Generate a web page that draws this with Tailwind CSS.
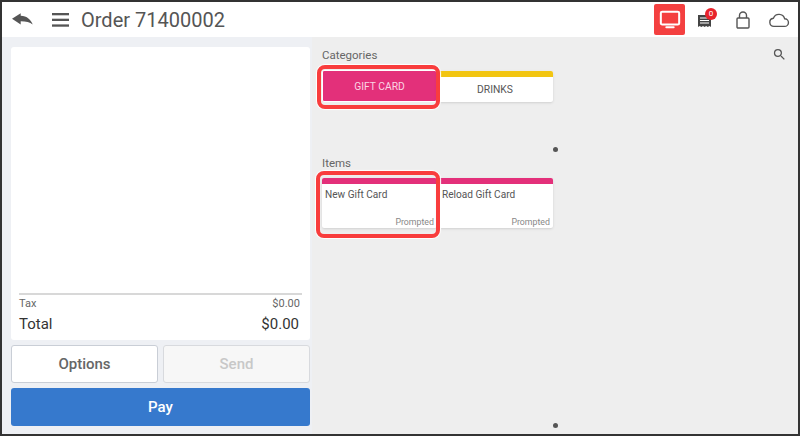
<!DOCTYPE html>
<html lang="en">
<head>
  <meta charset="UTF-8">
  <title>Order 71400002</title>
  <script src="https://cdn.jsdelivr.net/npm/@tailwindcss/browser@4"></script>
</head>
<body class="bg-white font-['Roboto',sans-serif]">
  <div class="w-[800px] h-[436px] border-2 border-[#333] flex flex-col overflow-hidden">
    <!-- top bar -->
    <header class="h-[35px] shrink-0 bg-white flex items-center pl-[8px] text-[#555]">
      <svg class="w-[24px] h-[16px]" viewBox="0 0 24 16" fill="#555"><path d="M2 6.8 10.7 1.2V3.8C17 3.8 21 8 22.7 12.5 20 10.2 16 9.2 10.7 9.2V12.5z"/></svg>
      <svg class="w-[17px] h-[14px] ml-[18px]" viewBox="0 0 17 14" fill="#555"><rect width="17" height="2.3"/><rect y="5.7" width="17" height="2.3"/><rect y="11.4" width="17" height="2.3"/></svg>
      <h1 class="ml-[12px] text-[20px] font-normal text-[#555]">Order 71400002</h1>
      <div class="ml-auto flex items-center pr-[8px]">
        <div class="w-[31px] h-[31px] mt-[-1px] bg-[#f44040] rounded-[2px] flex items-center justify-center">
          <svg class="w-[22px] h-[22px]" viewBox="0 0 24 24" fill="none" stroke="#fff" stroke-width="2.2"><rect x="2" y="4" width="20" height="14" rx="1.5"/><path d="M8 21h8" stroke-linecap="round"/></svg>
        </div>
        <div class="relative w-[20px] h-[20px] ml-[10px]">
          <svg class="w-[20px] h-[20px]" viewBox="0 0 20 20" fill="#444"><path d="M3 5h13v12l-1.6-1-1.6 1-1.6-1-1.6 1-1.6-1-1.6 1-1.7-1L3 17z"/><path d="M5 8h9M5 10.5h9M5 13h9" stroke="#fff" stroke-width="1.1"/></svg>
          <span class="absolute top-[-2px] right-[-2px] w-[12px] h-[12px] rounded-full bg-[#e8232b] text-white text-[8px] leading-[12px] text-center">0</span>
        </div>
        <svg class="w-[20px] h-[20px] ml-[18px]" viewBox="0 0 20 20" fill="none" stroke="#555" stroke-width="1.4"><rect x="4" y="8" width="12" height="10" rx="1"/><path d="M6.5 8V5.5a3.5 3.5 0 0 1 7 0V8"/></svg>
        <svg class="w-[22px] h-[22px] ml-[15px]" viewBox="0 0 24 24" fill="none" stroke="#555" stroke-width="1.5"><path d="M6.5 19a4.5 4.5 0 0 1-.6-8.96A6.5 6.5 0 0 1 18.2 10.6 4.2 4.2 0 0 1 18 19z"/></svg>
      </div>
    </header>

    <div class="flex-1 flex min-h-0">
      <!-- order panel -->
      <aside class="w-[310px] shrink-0 bg-[#eef0f4] pt-[10px] pl-[9px] pr-[2px] flex flex-col">
        <div class="h-[293px] bg-white rounded-[3px] flex flex-col justify-end px-[8px] pb-[3px] text-[#444]">
          <div class="border-t-2 border-[#d8d8d8] flex justify-between items-center pt-[1px] text-[11px] text-[#666] h-[19px] pr-[2px]">
            <span>Tax</span><span>$0.00</span>
          </div>
          <div class="flex justify-between items-center text-[15px] text-[#333] h-[25px] pr-[3px]">
            <span>Total</span><span>$0.00</span>
          </div>
        </div>
        <div class="flex gap-[5px] mt-[5px]">
          <button class="flex-1 h-[38px] bg-white border border-[#c9ced6] rounded-[3px] text-[15px] font-medium text-[#666]">Options</button>
          <button class="flex-1 h-[38px] bg-[#f7f7f7] border border-[#d8dade] rounded-[3px] text-[15px] font-medium text-[#c8c8c8]">Send</button>
        </div>
        <button class="mt-[5px] h-[38px] bg-[#3679cd] rounded-[3px] text-[15px] font-medium text-white">Pay</button>
      </aside>

      <!-- catalog -->
      <main class="relative flex-1 bg-[#eeeeee] pl-[10px] pt-[11px]">
        <div class="text-[11.5px] leading-[14px] text-[#666]">Categories</div>
        <div class="flex mt-[8px] h-[32px] w-[231px]">
          <div class="w-[115px] bg-[#e3307a] border border-white rounded-[2px] flex items-center justify-center text-[10.3px] text-[#fbd5e4] pt-[2px]">GIFT CARD</div>
          <div class="w-[116px] h-[31px] mt-[1px] bg-white rounded-[2px] shadow-sm flex flex-col">
            <div class="h-[6px] bg-[#f2c511] rounded-t-[2px]"></div>
            <div class="flex-1 flex items-center justify-center text-[10.3px] text-[#555]">DRINKS</div>
          </div>
        </div>
        <div class="text-[11.5px] leading-[14px] text-[#666] mt-[54px]">Items</div>
        <div class="flex mt-[8px] h-[50px] w-[231px]">
          <div class="w-[115px] bg-white rounded-[2px] shadow-sm flex flex-col">
            <div class="h-[6px] bg-[#e3307a] rounded-t-[2px]"></div>
            <div class="px-[3px] pt-[4px] text-[10.1px] leading-[14px] text-[#555]">New Gift Card</div>
            <div class="mt-auto pr-[3px] text-right text-[8.8px] leading-[11px] text-[#888]">Prompted</div>
          </div>
          <div class="w-[116px] bg-white rounded-[2px] shadow-sm flex flex-col">
            <div class="h-[6px] bg-[#e3307a] rounded-t-[2px]"></div>
            <div class="px-[5px] pt-[4px] text-[10.1px] leading-[14px] text-[#555]">Reload Gift Card</div>
            <div class="mt-auto pr-[3px] text-right text-[8.8px] leading-[11px] text-[#888]">Prompted</div>
          </div>
        </div>

        <!-- search + page dots -->
        <svg class="absolute top-[10px] right-[11px] w-[15px] h-[15px]" viewBox="0 0 24 24" fill="#555"><path d="M15.5 14h-.79l-.28-.27A6.47 6.47 0 0 0 16 9.5 6.5 6.5 0 1 0 9.5 16c1.61 0 3.09-.59 4.23-1.57l.27.28v.79l5 4.99L20.49 19l-4.99-5zm-6 0C7 14 5 12 5 9.5S7 5 9.5 5 14 7 14 9.5 12 14 9.5 14z"/></svg>
        <span class="absolute left-[241px] top-[110px] w-[5px] h-[5px] rounded-full bg-[#555]"></span>
        <span class="absolute left-[241px] top-[386px] w-[5px] h-[5px] rounded-full bg-[#555]"></span>

        <!-- red callouts -->
        <div class="absolute left-[5px] top-[28px] w-[123px] h-[44px] border-4 border-[#f93d3d] rounded-[8px] shadow-[0_0_1px_1px_#ffffff]"></div>
        <div class="absolute left-[4px] top-[134px] w-[124px] h-[67px] border-4 border-[#f93d3d] rounded-[8px] shadow-[0_0_1px_1px_#ffffff]"></div>
      </main>
    </div>
  </div>
</body>
</html>
